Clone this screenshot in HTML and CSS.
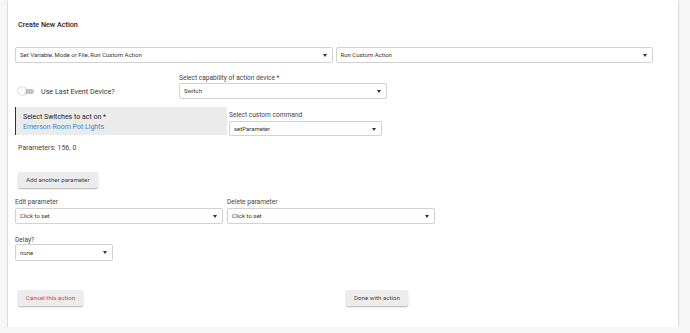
FILE: index.html
```html
<!DOCTYPE html>
<html lang="en">
<head>
    <meta charset="UTF-8">
    <meta name="viewport" content="width=device-width, initial-scale=1.0">
    <title>Create New Action</title>
    <link rel="stylesheet" href="styles.css">
</head>
<body>
    <div class="card">
        <h1 class="title">Create New Action</h1>

        <div class="row row-type">
            <div class="select wide">Set Variable, Mode or File, Run Custom Action</div>
            <div class="select wide">Run Custom Action</div>
        </div>

        <div class="row row-capability">
            <div class="toggle-cell">
                <span class="toggle"><span class="knob"></span></span>
                <span class="toggle-label">Use Last Event Device?</span>
            </div>
            <div class="field">
                <label>Select capability of action device *</label>
                <div class="select cap">Switch</div>
            </div>
        </div>

        <div class="row row-device">
            <div class="device-box">
                <div class="device-title">Select Switches to act on *</div>
                <div class="device-value">Emerson Room Pot Lights</div>
            </div>
            <div class="field">
                <label>Select custom command</label>
                <div class="select cmd">setParameter</div>
            </div>
        </div>

        <p class="params">Parameters: 156, 0</p>

        <button class="btn add">Add another parameter</button>

        <div class="row row-edit">
            <div class="field">
                <label>Edit parameter</label>
                <div class="select param">Click to set</div>
            </div>
            <div class="field">
                <label>Delete parameter</label>
                <div class="select param">Click to set</div>
            </div>
        </div>

        <div class="field delay">
            <label>Delay?</label>
            <div class="select short">none</div>
        </div>

        <div class="actions">
            <div><button class="btn cancel">Cancel this action</button></div>
            <div><button class="btn">Done with action</button></div>
        </div>
    </div>
</body>
</html>
```

FILE: styles.css
```css
body {
    margin: 0;
    background: #f6f6f6;
    font-family: Roboto, 'Liberation Sans', sans-serif;
    color: #333;
}

.card {
    box-sizing: border-box;
    margin-left: 8px;
    width: 670px;
    height: 327px;
    padding: 20px 25px 0 7px;
    background: #fff;
    box-shadow: 0 1px 2px rgba(0, 0, 0, 0.3);
}

.title {
    margin: 0 0 0 3px;
    font-size: 7.2px;
    line-height: 10px;
    font-weight: 500;
    color: #222;
}

.row {
    display: flex;
}

.row-type {
    margin-top: 17px;
    gap: 3px;
}

.select {
    position: relative;
    box-sizing: border-box;
    height: 16px;
    padding-left: 4px;
    border: 1px solid #d2d2d2;
    border-radius: 2px;
    background: #fff;
    font-size: 6px;
    line-height: 14px;
    color: #333;
    white-space: nowrap;
}

.select::after {
    content: "";
    position: absolute;
    right: 5px;
    top: 6px;
    border-left: 2.5px solid transparent;
    border-right: 2.5px solid transparent;
    border-top: 3px solid #333;
}

.select.wide { width: 318px; }
.select.cap { width: 208px; }
.select.cmd { width: 153px; height: 15px; line-height: 13px; }
.select.cmd::after { top: 5.5px; }
.select.param { width: 208px; }
.select.short { width: 98px; height: 17px; line-height: 15px; }
.select.short::after { top: 6.5px; }

label {
    display: block;
    font-size: 6.6px;
    line-height: 8px;
    color: #444;
}

.row-capability {
    margin-top: 11px;
}

.toggle-cell {
    width: 164px;
    display: flex;
    align-items: center;
    padding: 9px 0 0 3px;
    box-sizing: border-box;
}

.toggle {
    position: relative;
    width: 14px;
    height: 5px;
    margin-left: 2px;
    border-radius: 3px;
    background: #c4c4c4;
}

.knob {
    position: absolute;
    left: -2px;
    top: -2px;
    width: 8px;
    height: 8px;
    border-radius: 50%;
    background: #fafafa;
    box-shadow: 0 0 1.5px rgba(0, 0, 0, 0.45);
}

.toggle-label {
    margin-left: 7px;
    font-size: 7.2px;
    color: #333;
}

.field label {
    margin-bottom: 1px;
}

.row-device {
    margin-top: 8px;
    gap: 2px;
}

.row-device .field label {
    margin-top: 4px;
    margin-bottom: 2px;
}

.device-box {
    box-sizing: border-box;
    width: 212px;
    height: 28px;
    padding: 5px 0 0 7px;
    background: #ebebeb;
    border-left: 1px solid #333;
    font-size: 7px;
    line-height: 10px;
}

.device-title {
    color: #222;
}

.device-value {
    color: #3a83d0;
}

.params {
    margin: 8px 0 0 3px;
    font-size: 7px;
    line-height: 9px;
    color: #444;
}

.btn {
    display: inline-block;
    height: 16px;
    padding: 0 8px;
    border: none;
    border-radius: 2px;
    background: #ececec;
    box-shadow: 0 1px 1.5px rgba(0, 0, 0, 0.3);
    font-family: Roboto, 'Liberation Sans', sans-serif;
    font-size: 6.2px;
    color: #444;
    cursor: pointer;
}

.btn.add {
    margin: 19px 0 0 3px;
}

.row-edit {
    margin-top: 10px;
    gap: 4px;
}

.row-edit .field label {
    margin-bottom: 1.5px;
}

.delay {
    margin-top: 12px;
}

.delay label {
    margin-bottom: 0;
}

.actions {
    display: grid;
    grid-template-columns: 328px auto;
    margin-top: 24px;
}

.actions .btn {
    margin-left: 3px;
}

.btn.cancel {
    color: #f2323a;
}
```
